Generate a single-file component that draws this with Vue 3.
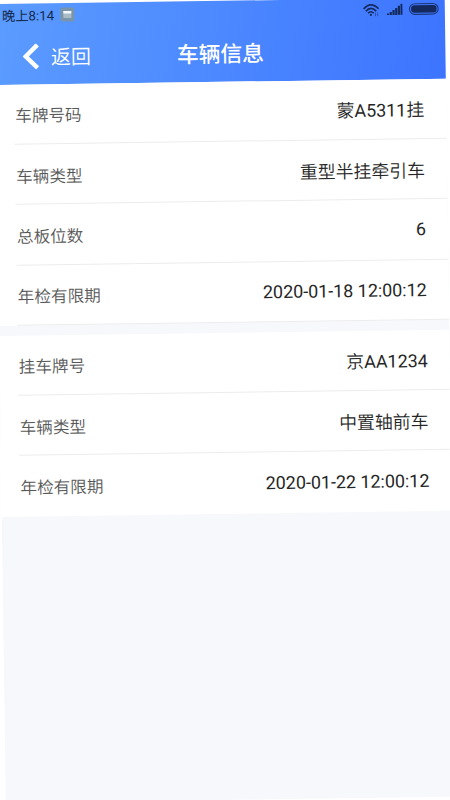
<script setup>
const groups = [
  [
    { label: '车牌号码', value: '蒙A5311挂' },
    { label: '车辆类型', value: '重型半挂牵引车' },
    { label: '总板位数', value: '6' },
    { label: '年检有限期', value: '2020-01-18 12:00:12' },
  ],
  [
    { label: '挂车牌号', value: '京AA1234' },
    { label: '车辆类型', value: '中置轴前车' },
    { label: '年检有限期', value: '2020-01-22 12:00:12' },
  ],
]
</script>

<template>
  <div class="stage">
    <main class="screen">
      <header class="header">
        <div class="status">
          <span class="clock">晚上8:14</span>
          <svg class="app-badge" width="15" height="15" viewBox="0 0 15 15">
            <rect x="0.5" y="0.5" width="14" height="14" rx="2" fill="#7895ac" />
            <rect x="3.5" y="4" width="8" height="7" fill="#a9bcc8" />
            <rect x="3.5" y="4" width="8" height="2.5" fill="#f3f7fa" />
          </svg>
          <div class="indicators">
            <svg width="17" height="13" viewBox="0 0 17 13" fill="none" stroke="#142a5e" stroke-width="1.7">
              <path d="M0.8 5.1Q8 -2.9 15.8 5.1" />
              <path d="M3 7.4Q8 2 13.4 7.4" />
              <path d="M5.2 9.5Q8 6.5 10.8 9.5" />
              <circle cx="8" cy="11.2" r="1.1" fill="#142a5e" stroke="none" />
              <path d="M12.6 8.8v3.7M14.8 8.8v3.7" stroke-width="1" opacity="0.5" />
            </svg>
            <svg class="signal" width="16" height="12" viewBox="0 0 16 12" fill="#142a5e">
              <path d="M0 11.5V10h2.200v1.500zM2.800 11.500V8.500h2.200v3zM5.600 11.500V6.500h2.200v5zM8.300 11.500V4.500h2.200v7zM11 11.500V2.500h2.200v9zM13.700 11.500V0.500h2v11z" />
            </svg>
            <svg class="battery" width="30" height="12" viewBox="0 0 30 12">
              <rect x="0.6" y="0.6" width="28.800" height="10.600" rx="5.300" fill="none" stroke="#1c3778" stroke-width="1.100" />
              <rect x="2.200" y="2.200" width="25.600" height="7.400" rx="3.500" fill="#142a5e" />
            </svg>
          </div>
        </div>
        <div class="nav">
          <div class="back">
            <svg width="17" height="26" viewBox="0 0 17 26" fill="none" stroke="#fff" stroke-width="4.4">
              <path d="M15 1.500L3.300 13L15 24.500" />
            </svg>
            <span>返回</span>
          </div>
          <h1>车辆信息</h1>
          <span></span>
        </div>
      </header>
      <section v-for="(rows, i) in groups" :key="i" class="group">
        <div v-for="row in rows" :key="row.label" class="row">
          <span class="label">{{ row.label }}</span>
          <span class="value">{{ row.value }}</span>
        </div>
      </section>
    </main>
  </div>
</template>

<style>
body {
  margin: 0;
  background: #fff;
}
</style>

<style scoped>
.stage {
  width: 450px;
  height: 800px;
  overflow: hidden;
  background: #fff;
  font-family: Roboto, "Noto Sans CJK SC", sans-serif;
}
.screen {
  width: 450px;
  height: 799px;
  background: #f6f8fb;
  transform: translate(-5.3px, 4px) rotate(-0.8deg);
  transform-origin: 0 0;
}
.header {
  height: 80.5px;
  background: linear-gradient(100deg, #5b9cff 0%, #3d74ff 100%);
}
.status {
  display: flex;
  align-items: center;
  height: 25px;
  padding: 0 6px 0 7px;
  color: #152a50;
  font-size: 13.3px;
}
.clock {
  margin-top: -3px;
}
.app-badge {
  margin: -2px 0 0 6px;
}
.indicators {
  display: flex;
  align-items: center;
  margin: -3px 0 0 auto;
}
.signal {
  margin-left: 7px;
}
.battery {
  margin-left: 6px;
}
.nav {
  display: grid;
  grid-template-columns: 1fr auto 1fr;
  align-items: center;
  height: 55px;
  color: #fff;
}
.back {
  display: flex;
  align-items: center;
  gap: 12px;
  padding-left: 26.5px;
  font-size: 20px;
  font-weight: 350;
}
h1 {
  margin: 2px 0 0;
  font-size: 21.8px;
  line-height: 30px;
  font-weight: 500;
}
.group {
  margin-bottom: 9.5px;
  background: #fff;
}
.row {
  display: flex;
  align-items: center;
  justify-content: space-between;
  box-sizing: border-box;
  height: 60.4px;
  margin-left: 18px;
  padding: 2px 22px 0 1px;
  border-bottom: 1px solid #ececee;
}
.group:last-child .row:last-child {
  border-bottom-color: transparent;
}
.label {
  color: #585858;
  font-size: 16.6px;
  font-weight: 350;
}
.value {
  margin-top: -2px;
  color: #262626;
  font-family: Roboto, "Noto Sans CJK SC DemiLight", "Noto Sans CJK SC", sans-serif;
  font-size: 17.9px;
}
</style>
